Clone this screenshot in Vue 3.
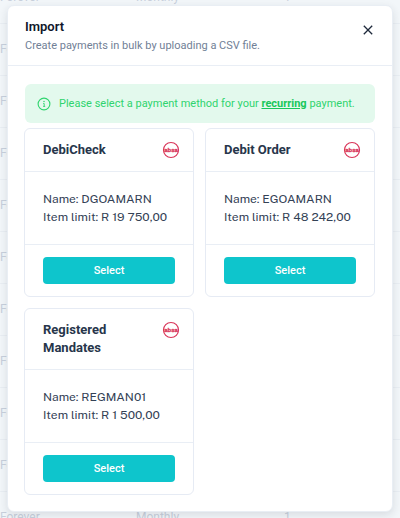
<script setup>
const methods = [
  { title: 'DebiCheck', name: 'DGOAMARN', limit: 'R 19 750,00' },
  { title: 'Debit Order', name: 'EGOAMARN', limit: 'R 48 242,00' },
  { title: 'Registered Mandates', name: 'REGMAN01', limit: 'R 1 500,00' },
]
</script>

<template>
  <div class="page">
    <table class="backdrop" aria-hidden="true">
      <tbody>
        <tr v-for="n in 11" :key="n">
          <td class="term">Forever</td>
          <td class="period">Monthly</td>
          <td>1</td>
        </tr>
      </tbody>
    </table>

    <section class="modal" role="dialog" aria-labelledby="modal-title">
      <header class="modal-header">
        <div>
          <h1 id="modal-title">Import</h1>
          <p>Create payments in bulk by uploading a CSV file.</p>
        </div>
        <button class="close" type="button" aria-label="Close">
          <svg viewBox="0 0 10 10" width="10" height="10">
            <path d="M.8 .8L9.2 9.2M9.2 .8L.8 9.2" fill="none" stroke="currentColor" stroke-width="1.3" />
          </svg>
        </button>
      </header>

      <div class="modal-body">
        <div class="notice">
          <svg viewBox="0 0 14 14" width="14" height="14">
            <circle cx="7" cy="7" r="5.9" fill="none" stroke="currentColor" stroke-width="1.1" />
            <circle cx="7" cy="4.6" r=".75" fill="currentColor" />
            <path d="M6.2 6.5H7.2V9.4M6.1 9.4H8.2" fill="none" stroke="currentColor" stroke-width=".9" />
          </svg>
          <span>Please select a payment method for your <a href="#">recurring</a> payment.</span>
        </div>

        <div class="cards">
          <article v-for="m in methods" :key="m.name" class="card">
            <div class="card-header">
              <h2>{{ m.title }}</h2>
              <svg class="logo" viewBox="0 0 18 18" width="18" height="18" role="img" aria-label="absa">
                <circle cx="9" cy="9" r="7.5" fill="none" stroke="currentColor" stroke-width="1.2" />
                <text x="9" y="10.8" text-anchor="middle">absa</text>
              </svg>
            </div>
            <div class="card-body">
              <p>Name: {{ m.name }}</p>
              <p>Item limit: {{ m.limit }}</p>
            </div>
            <div class="card-footer">
              <button class="select" type="button">Select</button>
            </div>
          </article>
        </div>
      </div>
    </section>
  </div>
</template>

<style>
body {
  margin: 0;
  background: #f2f6f9;
}
</style>

<style scoped>
* {
  box-sizing: border-box;
}
.page {
  position: relative;
  min-height: 100vh;
  padding: 5px 7px 6px;
  overflow: hidden;
  font-family: Roboto, "Liberation Sans", sans-serif;
  color: #334155;
}
h1, h2, p {
  margin: 0;
}
.backdrop {
  position: absolute;
  top: -29px;
  left: 0;
  width: 100%;
  border-collapse: collapse;
  table-layout: fixed;
  font-size: 12px;
  color: #c8d0dc;
}
.backdrop td {
  height: 52px;
  padding: 0;
  border-bottom: 1px solid #e9eef3;
}
.backdrop .term {
  width: 34%;
}
.backdrop .period {
  width: 37%;
}
.modal {
  position: relative;
  background: #fff;
  border: 1px solid #e9eef4;
  border-radius: 7px;
  box-shadow: 0 3px 8px rgba(30, 41, 59, 0.12);
}
.modal-header {
  display: flex;
  justify-content: space-between;
  align-items: center;
  padding: 11px 18px 10px 17px;
  border-bottom: 1px solid #e9eef5;
}
h1 {
  font-size: 13px;
  line-height: 20px;
  font-weight: 600;
  color: #0f172a;
}
.modal-header p {
  font-size: 11px;
  line-height: 18px;
  color: #718096;
}
.close {
  display: flex;
  align-items: center;
  justify-content: center;
  width: 12px;
  height: 12px;
  margin-bottom: 12px;
  padding: 0;
  border: 0;
  background: none;
  color: #1e293b;
}
.modal-body {
  padding: 18px 17px 16px;
}
.notice {
  display: flex;
  align-items: center;
  gap: 8px;
  min-height: 39px;
  margin-bottom: 5px;
  padding: 8px 12px;
  border-radius: 6px;
  background: #e3f9ed;
  color: #2fd46e;
  font-size: 11px;
  line-height: 18px;
}
.notice svg {
  flex: none;
}
.notice a {
  color: #18c75a;
  font-weight: 700;
}
.cards {
  display: grid;
  grid-template-columns: 1fr 1fr;
  gap: 11px;
  margin-left: -1px;
}
.card {
  border: 1px solid #e6ebf4;
  border-radius: 6px;
}
.card-header {
  display: flex;
  justify-content: space-between;
  align-items: flex-start;
  gap: 12px;
  padding: 12px 13px 12px 18px;
  border-bottom: 1px solid #e9eef5;
}
h2 {
  font-size: 13px;
  line-height: 18px;
  font-weight: 700;
  color: #27364b;
}
.logo {
  flex: none;
  color: #d9365a;
}
.logo text {
  font: 700 6px "Liberation Sans", sans-serif;
  fill: currentColor;
  stroke: currentColor;
  stroke-width: 0.3px;
}
.card-body {
  padding: 18px;
  font-family: "Public Sans", Roboto, sans-serif;
  font-size: 12px;
  line-height: 18px;
}
.card-footer {
  padding: 12px 18px;
  border-top: 1px solid #e9eef5;
}
.select {
  display: block;
  width: 100%;
  height: 27px;
  padding: 0;
  border: 0;
  border-radius: 4px;
  background: #0ec5cc;
  color: #fff;
  font: 500 11px/18px Roboto, "Liberation Sans", sans-serif;
}
</style>
